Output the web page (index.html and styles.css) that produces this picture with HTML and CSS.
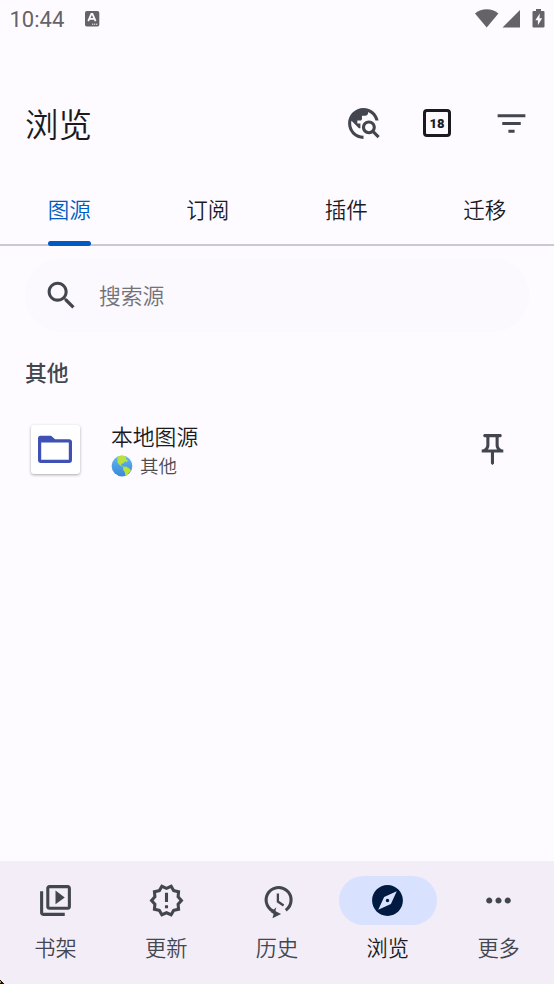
FILE: index.html
```html
<!DOCTYPE html>
<html lang="zh-CN">
<head>
<meta charset="utf-8">
<title>浏览</title>
<link rel="stylesheet" href="styles.css">
</head>
<body>
<div class="screen">
  <header class="status">
    <span class="time">10:44</span>
    <svg class="badge" width="16" height="17" viewBox="0 0 16 17"><rect x="1" y="1" width="14.3" height="15.6" rx="1.8" fill="#656367"/><path d="M4.2 11.2 7.4 4h1L11.6 11.2M5.4 8.9h5" fill="none" stroke="#fdfbff" stroke-width="1.8"/><path d="M8 14.2h6" stroke="#fdfbff" stroke-dasharray="1.2 .7"/></svg>
    <svg class="signals" width="70" height="20" viewBox="0 0 70 20"><g fill="#656367"><path d="M0 4.5C3.6 1.6 7.4.3 11.7.3S19.800 1.600 23.400 4.500L11.700 18.500Z"/><path d="M45 1v17.500H27.500Z"/><path d="M61 0h5v2h2.500q1 0 1 1v14.500q0 1-1 1H58.500q-1 0-1-1V3q0-1 1-1H61Z"/></g><path d="M64.800 4.500 60.300 11.200h2.600v5l4.200-7h-2.600Z" fill="#fdfbff"/></svg>
  </header>

  <div class="appbar">
    <h1>浏览</h1>
    <div class="actions">
      <svg class="icon" viewBox="0 0 24 24"><path d="M19.3 16.900c.4-.7.7-1.500.7-2.400 0-2.500-2-4.500-4.500-4.500S11 12 11 14.500s2 4.500 4.500 4.500c.9 0 1.700-.3 2.400-.7l3.200 3.200 1.400-1.400-3.200-3.200zm-3.800.1c-1.400 0-2.500-1.100-2.500-2.500s1.100-2.500 2.500-2.500 2.500 1.100 2.500 2.500-1.100 2.500-2.500 2.500zM12 20v2C6.480 22 2 17.520 2 12S6.480 2 12 2c4.840 0 8.870 3.440 9.800 8h-2.070c-.64-2.460-2.400-4.470-4.730-5.410V5c0 1.100-.9 2-2 2h-2v2c0 .55-.45 1-1 1H8v2h2v3H9l-4.790-4.790C4.080 10.790 4 11.380 4 12c0 4.410 3.590 8 8 8z"/></svg>
      <span class="rating">18</span>
      <svg class="icon" viewBox="0 0 24 24"><path d="M10 18h4v-2h-4v2zM3 6v2h18V6H3zm3 7h12v-2H6v2z"/></svg>
    </div>
  </div>

  <nav class="tabs">
    <div class="tab active"><span>图源</span></div>
    <div class="tab"><span>订阅</span></div>
    <div class="tab"><span>插件</span></div>
    <div class="tab"><span>迁移</span></div>
  </nav>

  <main>
    <div class="search">
      <svg class="icon" viewBox="0 0 24 24"><path d="M15.500 14h-.79l-.28-.27C15.410 12.590 16 11.110 16 9.500 16 5.910 13.090 3 9.500 3S3 5.910 3 9.500 5.910 16 9.500 16c1.610 0 3.090-.59 4.230-1.570l.27.28v.79l5 4.990L20.490 19l-4.990-5zm-6 0C7.010 14 5 11.990 5 9.500S7.010 5 9.500 5 14 7.010 14 9.500 11.990 14 9.500 14z"/></svg>
      <span>搜索源</span>
    </div>
    <h2>其他</h2>
    <div class="source">
      <div class="thumb"><svg width="36" height="30" viewBox="0 0 36 30"><path fill="#3f51b5" fill-rule="evenodd" d="M3.500.8h10.600l4 3.400H32q3 0 3 3V25q0 3-3 3H4q-3 0-3-3V3.300Q1 .8 3.500.8ZM4.200 7.600v17.200h27.600V7.600Z"/></svg></div>
      <div class="info">
        <div class="name">本地图源</div>
        <div class="lang"><svg width="22" height="22" viewBox="0 0 22 22"><defs><linearGradient id="sea" x2="0" y2="1"><stop stop-color="#64b5f6"/><stop offset="1" stop-color="#3989d5"/></linearGradient></defs><circle cx="11" cy="11" r="10.400" fill="url(#sea)"/><path fill="#b9e23f" d="M6.500 1.800Q11-.4 15.500 1.800L15 4l2 1.500-1.500 1.800-1.500-1-1.200 2-2 .2-.8 1.500 1.500 1.500 4 .3 3.500 2.200 1 2-2 1.500-1.500 2.800-2 .6-.8-4-1.700-2.500.3-2L8.500 10 6.500 7.500Z"/></svg><span>其他</span></div>
      </div>
      <svg class="icon pin" viewBox="0 0 24 24"><path d="M14 4v5c0 1.120.37 2.160 1 3H9c.65-.86 1-1.900 1-3V4h4m3-2H7c-.55 0-1 .45-1 1s.45 1 1 1h1v5c0 1.660-1.340 3-3 3v2h5.970v7l1 1 1-1v-7H19v-2c-1.660 0-3-1.340-3-3V4h1c.55 0 1-.45 1-1s-.45-1-1-1z"/></svg>
    </div>
  </main>

  <nav class="bottom">
    <div class="item"><div class="pill"><svg class="icon" viewBox="0 0 24 24"><path d="M4 6H2v14c0 1.100.9 2 2 2h14v-2H4V6zm16-4H8c-1.100 0-2 .9-2 2v12c0 1.100.9 2 2 2h12c1.100 0 2-.9 2-2V4c0-1.100-.9-2-2-2zm0 14H8V4h12v12zM12 5.500v9l6-4.500z"/></svg></div><span>书架</span></div>
    <div class="item"><div class="pill"><svg class="icon" viewBox="0 0 24 24"><path d="M23 12l-2.440-2.780.34-3.680-3.610-.82-1.890-3.180L12 3 8.600 1.540 6.710 4.720l-3.610.81.34 3.680L1 12l2.440 2.780-.34 3.690 3.610.82 1.890 3.180L12 21l3.400 1.460 1.890-3.180 3.610-.82-.34-3.680L23 12zm-4.510 2.110.26 2.790-2.740.62-1.430 2.410L12 18.820l-2.580 1.110-1.430-2.410-2.740-.62.26-2.800L3.660 12l1.850-2.120-.26-2.780 2.740-.61 1.430-2.410L12 5.180l2.580-1.110 1.430 2.410 2.740.62-.26 2.790L20.340 12l-1.850 2.110zM11 15h2v2h-2zM11 7h2v6h-2z"/></svg></div><span>更新</span></div>
    <div class="item"><div class="pill"><svg class="icon" viewBox="0 0 24 24"><g fill="none" stroke="#44464f" stroke-width="2"><path d="M10.800 19.900A8.100 8.100 0 1 1 17.500 18.700" transform="translate(.5 -.4)"/><path d="M12.900 7.500v5.200l3.700 2.500" stroke-width="1.500"/></g><path d="m12 16.400-.9 2.400 3.900 2L9.400 23.500l.7-2.800-1.900-1.200Z"/></svg></div><span>历史</span></div>
    <div class="item selected"><div class="pill"><svg class="icon" viewBox="0 0 24 24"><path d="M12 10.900c-.61 0-1.100.49-1.100 1.100s.49 1.100 1.100 1.100c.61 0 1.100-.49 1.100-1.100s-.49-1.100-1.100-1.100zM12 2C6.480 2 2 6.480 2 12s4.480 10 10 10 10-4.480 10-10S17.520 2 12 2zm2.190 12.190L6 18l3.810-8.190L18 6l-3.810 8.190z"/></svg></div><span>浏览</span></div>
    <div class="item"><div class="pill"><svg class="icon" viewBox="0 0 24 24"><path d="M6 10c-1.100 0-2 .9-2 2s.9 2 2 2 2-.9 2-2-.9-2-2-2zm12 0c-1.100 0-2 .9-2 2s.9 2 2 2 2-.9 2-2-.9-2-2-2zm-6 0c-1.100 0-2 .9-2 2s.9 2 2 2 2-.9 2-2-.9-2-2-2z"/></svg></div><span>更多</span></div>
    <svg class="corner" width="4" height="4" viewBox="0 0 4 4"><path d="M0 0h1v1h1v1h1v1h1v1H0Z" fill="#16110d"/><path d="M0 1h1v2H0Z" fill="#c48b50"/></svg>
  </nav>
</div>
</body>
</html>
```
FILE: styles.css
```css
* { box-sizing: border-box; }
body {
  margin: 0;
  background: #fdfbff;
  color: #1b1b1f;
  font-family: "Noto Sans CJK SC", sans-serif;
  font-weight: 350;
}
.screen { display: flex; flex-direction: column; height: 984px; overflow: hidden; }
.icon { display: block; width: 37px; height: 37px; fill: #44464f; flex: none; }

.status { display: flex; align-items: center; height: 37px; padding: 0 9px 0 9.500px; color: #656367; }
.time { font-family: Roboto, sans-serif; font-weight: 400; font-size: 22px; line-height: 37px; padding-top: 2px; }
.badge { margin-left: 20px; }
.signals { margin-left: auto; }

.appbar { display: flex; align-items: center; justify-content: space-between; height: 135px; padding: 37px 25px 0; }
h1 { margin: 0; padding-bottom: 1px; font-size: 33.500px; line-height: 48px; font-weight: 350; }
.actions { display: flex; align-items: center; gap: 37px; margin-right: -.5px; }
.rating {
  display: flex; align-items: center; justify-content: center;
  width: 28px; height: 28px; margin: 0 4.500px;
  border: 3px solid #1b1b1f; border-radius: 4px;
  font-family: Roboto, sans-serif; font-size: 13px; font-weight: 900; line-height: 1;
}

.tabs { display: grid; grid-template-columns: repeat(4, 1fr); height: 74px; border-bottom: 2px solid #c8c9d1; }
.tab { display: flex; justify-content: center; }
.tab span { height: 74px; padding: 0 .5px; font-size: 21.500px; line-height: 74px; }
.active span { display: flex; flex-direction: column; color: #005ac1; }
.active span::after { content: ""; flex: none; height: 5px; margin-top: -5px; border-radius: 2.500px; background: #005ac1; }

main { flex: 1; padding: 12px 25px; }
.search { display: flex; align-items: center; height: 74px; padding-left: 18px; gap: 19px; border-radius: 37px; background: #fbf8fe; color: #727277; font-size: 21.800px; }
.search span { padding-bottom: 2px; }
h2 { margin: 22px 0 0; font-size: 21.800px; line-height: 36px; font-weight: 500; color: #44464f; }
.source { display: flex; align-items: center; height: 74px; margin-top: 22px; padding-left: 6px; }
.thumb { display: flex; align-items: center; justify-content: center; width: 49px; height: 49px; padding: 1px 1px 0 0; border-radius: 3px; background: #fff; box-shadow: 0 1px 3px #0005; }
.info { margin-left: 31px; padding-top: 1px; }
.name { font-size: 21.800px; line-height: 32px; }
.lang { display: flex; align-items: center; gap: 7px; font-size: 18.500px; line-height: 27px; color: #4d4d51; }
.pin { margin: 0 18px 0 auto; }

.bottom { position: relative; display: grid; grid-template-columns: repeat(5, 1fr); height: 123px; padding-top: 15px; background: #f2edf7; color: #44464f; }
.item { display: flex; flex-direction: column; align-items: center; font-size: 21.200px; line-height: 32px; gap: 6px; }
.pill { display: flex; align-items: center; justify-content: center; width: 98px; height: 49px; border-radius: 25px; }
.selected { color: #1b1b1f; }
.selected .pill { background: #d8e2ff; }
.selected .icon { fill: #001a41; }
.corner { position: absolute; left: 0; bottom: 0; }
```
